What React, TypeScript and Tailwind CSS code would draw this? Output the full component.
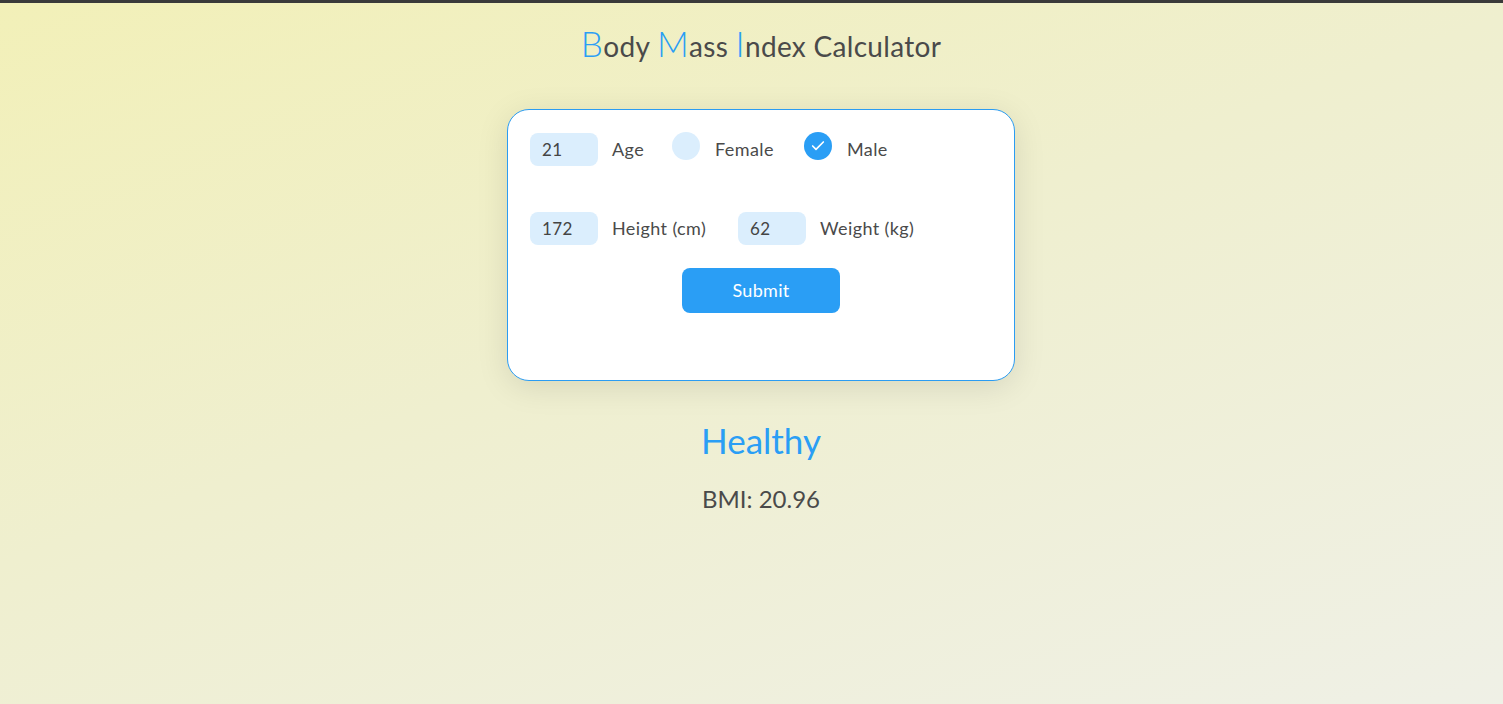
import { Check } from 'lucide-react';

const FONT = "font-['Lato','Open_Sans',sans-serif]";

function NumberBox({ value }: { value: string }) {
  return (
    <div className="flex h-[33px] w-[68px] items-center rounded-lg bg-[#dbeefd] px-3 pt-[1px] text-[17px] text-[#444]">
      {value}
    </div>
  );
}

function Radio({ checked }: { checked?: boolean }) {
  return (
    <div
      className={
        checked
          ? 'flex h-[28px] w-[28px] items-center justify-center rounded-full bg-[#2a9ef5]'
          : 'h-[28px] w-[28px] rounded-full bg-[#dbeefd]'
      }
    >
      {checked && <Check className="h-4 w-4 text-white" strokeWidth={2.5} />}
    </div>
  );
}

export default function App() {
  return (
    <div className={`${FONT} min-h-[704px] border-t-[3px] border-[#3a3a3a] bg-[linear-gradient(160deg,#f2f0b8_0%,#efefcf_45%,#eff0e6_100%)] pl-[19px] text-[#4a4a4a]`}>
      <h1 className="pt-[14px] text-center text-[28px] font-normal tracking-[0.3px]">
        <span className="text-[35px] font-light text-[#2a9ef5]">B</span>ody{' '}
        <span className="text-[35px] font-light text-[#2a9ef5]">M</span>ass{' '}
        <span className="text-[35px] font-light text-[#2a9ef5]">I</span>ndex Calculator
      </h1>

      <div className="mx-auto mt-[39px] h-[272px] w-[508px] rounded-[22px] border border-[#2b9cf2] bg-white px-[22px] pt-[23px] shadow-[0_6px_32px_rgba(0,0,0,0.1)]">
        <div className="flex items-center text-[18px] tracking-[0.4px]">
          <NumberBox value="21" />
          <span className="ml-[14px] w-[60px]">Age</span>
          <div className="-mt-[6px]">
            <Radio />
          </div>
          <span className="ml-[15px] w-[89px]">Female</span>
          <div className="-mt-[6px]">
            <Radio checked />
          </div>
          <span className="ml-[15px]">Male</span>
        </div>

        <div className="mt-[46px] flex items-center text-[18px] tracking-[0.4px]">
          <NumberBox value="172" />
          <span className="ml-[14px] w-[126px]">Height (cm)</span>
          <NumberBox value="62" />
          <span className="ml-[14px]">Weight (kg)</span>
        </div>

        <div className="mt-[23px] flex justify-center">
          <button className="h-[45px] w-[158px] rounded-lg bg-[#2a9ef5] text-[18px] tracking-[0.3px] text-white">
            Submit
          </button>
        </div>
      </div>

      <div className="mt-[33px] text-center text-[35px] text-[#2a9ef5]">Healthy</div>
      <div className="mt-[15px] text-center text-[24px] text-[#4a4a4a]">BMI: 20.96</div>
    </div>
  );
}
